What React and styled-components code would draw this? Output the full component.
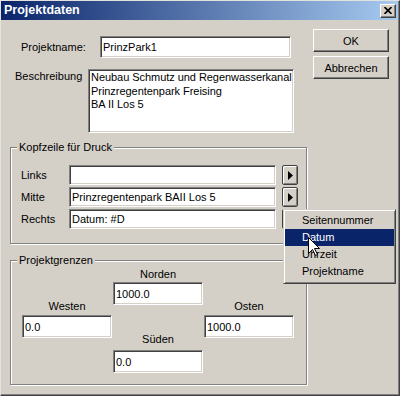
import React from 'react';
import styled, { createGlobalStyle } from 'styled-components';

const GlobalStyle = createGlobalStyle`
  html, body { margin: 0; padding: 0; background: #D4D0C8; }
  body { font-family: "Liberation Sans", Arial, sans-serif; font-size: 11px; color: #000; }
  * { box-sizing: border-box; }
`;

const Window = styled.div`
  position: relative;
  width: 400px;
  height: 396px;
  background: #D4D0C8;
  border: 1px solid;
  border-color: #E4E2DC #404040 #404040 #E4E2DC;
  box-shadow: inset -1px -1px 0 #808080;
  padding: 0 1px 1px 0;
  display: flex;
  flex-direction: column;
`;

const TitleBar = styled.div`
  height: 19px;
  flex: none;
  display: flex;
  align-items: center;
  justify-content: space-between;
  padding: 0 2px 0 3px;
  background: linear-gradient(to right, #0A246A, #A6CAF0);
`;

const Title = styled.span`
  color: #fff;
  font-weight: bold;
  font-size: 12.5px;
  line-height: 15px;
`;

const CloseButton = styled.div`
  width: 16px;
  height: 14px;
  background: #D4D0C8;
  border: 1px solid;
  border-color: #fff #404040 #404040 #fff;
  box-shadow: inset -1px -1px 0 #808080;
  display: flex;
  align-items: center;
  justify-content: center;
`;

const Body = styled.div`
  flex: 1;
  display: grid;
  grid-template-columns: 297px 76px;
  column-gap: 6px;
  align-items: start;
  padding-left: 9px;
`;

const MainCol = styled.div`
  display: flex;
  flex-direction: column;
  padding-top: 16px;
`;

const ButtonCol = styled.div`
  display: flex;
  flex-direction: column;
  gap: 4px;
  padding-top: 9px;
`;

const PushButton = styled.button`
  width: 76px;
  height: 23px;
  margin: 0;
  padding: 0;
  font: inherit;
  font-size: 11px;
  color: #000;
  background: #D4D0C8;
  border: 1px solid;
  border-color: #fff #404040 #404040 #fff;
  box-shadow: inset -1px -1px 0 #808080;
`;

const FormRow = styled.div`
  display: flex;
  align-items: ${p => (p.$top ? 'flex-start' : 'center')};
  padding-left: ${p => p.$indent}px;
  margin-top: ${p => p.$mt || 0}px;
`;

const Label = styled.span`
  flex: none;
  width: ${p => p.$w}px;
  line-height: 13px;
  margin-top: ${p => p.$mt || 0}px;
  white-space: nowrap;
`;

const sunken = `
  border: 1px solid;
  border-color: #808080 #fff #fff #808080;
  box-shadow: inset 1px 1px 0 #404040, inset -1px -1px 0 #D4D0C8;
  background: #fff;
`;

const Field = styled.input`
  ${sunken}
  flex: none;
  width: ${p => p.$w}px;
  height: ${p => p.$h}px;
  margin: ${p => p.$mt || 0}px 0 0 0;
  padding: 0 1px 0 2px;
  font-family: "Liberation Sans", Arial, sans-serif;
  font-size: 11px;
  color: #000;
  outline: none;
`;

const TextBox = styled.textarea`
  ${sunken}
  flex: none;
  width: 206px;
  height: 64px;
  margin: 0;
  padding: 1px 0 0 2px;
  font-family: "Liberation Sans", Arial, sans-serif;
  font-size: 11px;
  line-height: 13.5px;
  letter-spacing: -0.05px;
  color: #000;
  white-space: pre;
  resize: none;
  overflow: hidden;
  outline: none;
`;

const Group = styled.fieldset`
  width: 297px;
  min-width: 0;
  margin: ${p => p.$mt}px 0 0 0;
  padding: 0;
  border: 1px solid #808080;
  box-shadow: inset 1px 1px 0 #fff, 1px 1px 0 #fff;
`;

const Legend = styled.legend`
  margin-left: 6px;
  padding: 0 2px;
  line-height: 14px;
  font-size: 11px;
  background: #D4D0C8;
`;

const HeaderRows = styled.div`
  display: flex;
  flex-direction: column;
  gap: 2px;
  padding: 11px 0 14px 10px;
`;

const HeaderRow = styled.div`
  display: flex;
  align-items: center;
  height: 20px;
`;

const ArrowButton = styled.div`
  flex: none;
  width: 16px;
  height: 20px;
  margin-left: 6px;
  background: #D4D0C8;
  border: 1px solid #404040;
  border-radius: 2px;
  box-shadow: inset 1px 1px 0 #fff, inset -1px -1px 0 #808080;
  display: flex;
  align-items: center;
  justify-content: center;
`;

const BoundsGrid = styled.div`
  display: grid;
  grid-template-columns: 91px 91px 91px;
  align-items: start;
  padding: 0 0 11px 11px;
`;

const BoundsCol = styled.div`
  display: flex;
  flex-direction: column;
`;

const Caption = styled.div`
  width: 90px;
  text-align: center;
  line-height: 13px;
  margin-top: ${p => p.$mt || 0}px;
`;

const Menu = styled.div`
  position: absolute;
  left: 282px;
  top: 208px;
  width: 113px;
  background: #D4D0C8;
  border: 1px solid;
  border-color: #D4D0C8 #404040 #404040 #D4D0C8;
  box-shadow: inset 1px 1px 0 #fff, inset -1px -1px 0 #808080;
  padding: 2px 1px 3px 1px;
`;

const MenuItem = styled.div`
  height: 17px;
  line-height: 17px;
  padding-left: 17px;
  white-space: nowrap;
  background: ${p => (p.$active ? '#0A246A' : 'transparent')};
  color: ${p => (p.$active ? '#fff' : '#000')};
`;

const Cursor = styled.svg`
  position: absolute;
  left: 307px;
  top: 236px;
`;

const Arrow = () => (
  <svg width="5" height="9" viewBox="0 0 5 9">
    <polygon points="0,0 5,4.5 0,9" fill="#000" />
  </svg>
);

export default function App() {
  return (
    <>
      <GlobalStyle />
      <Window>
        <TitleBar>
          <Title>Projektdaten</Title>
          <CloseButton>
            <svg width="8" height="7" viewBox="0 0 8 7">
              <path d="M0.5 0 L7.5 7 M7.5 0 L0.5 7" stroke="#000" strokeWidth="1.6" />
            </svg>
          </CloseButton>
        </TitleBar>
        <Body>
          <MainCol>
            <FormRow $indent={11}>
              <Label $w={79}>Projektname:</Label>
              <Field $w={191} $h={22} readOnly value="PrinzPark1" />
            </FormRow>
            <FormRow $indent={5} $mt={11} $top>
              <Label $w={73} $mt={1}>Beschreibung</Label>
              <TextBox
                readOnly
                wrap="off"
                value={'Neubau Schmutz und Regenwasserkanal\nPrinzregentenpark Freising\nBA II Los 5'}
              />
            </FormRow>
            <Group $mt={7}>
              <Legend>Kopfzeile für Druck</Legend>
              <HeaderRows>
                <HeaderRow>
                  <Label $w={48}>Links</Label>
                  <Field $w={207} $h={20} readOnly value="" />
                  <ArrowButton><Arrow /></ArrowButton>
                </HeaderRow>
                <HeaderRow>
                  <Label $w={48}>Mitte</Label>
                  <Field $w={207} $h={20} readOnly value="Prinzregentenpark BAII Los 5" />
                  <ArrowButton><Arrow /></ArrowButton>
                </HeaderRow>
                <HeaderRow>
                  <Label $w={48}>Rechts</Label>
                  <Field $w={207} $h={20} readOnly value="Datum: #D" />
                  <ArrowButton><Arrow /></ArrowButton>
                </HeaderRow>
              </HeaderRows>
            </Group>
            <Group $mt={9}>
              <Legend>Projektgrenzen</Legend>
              <BoundsGrid>
                <BoundsCol>
                  <Caption $mt={33}>Westen</Caption>
                  <Field $w={90} $h={23} $mt={2} readOnly value="0.0" />
                </BoundsCol>
                <BoundsCol>
                  <Caption $mt={1}>Norden</Caption>
                  <Field $w={90} $h={23} $mt={1} readOnly value="1000.0" />
                  <Caption $mt={28}>Süden</Caption>
                  <Field $w={90} $h={23} $mt={4} readOnly value="0.0" />
                </BoundsCol>
                <BoundsCol>
                  <Caption $mt={33}>Osten</Caption>
                  <Field $w={90} $h={23} $mt={2} readOnly value="1000.0" />
                </BoundsCol>
              </BoundsGrid>
            </Group>
          </MainCol>
          <ButtonCol>
            <PushButton>OK</PushButton>
            <PushButton>Abbrechen</PushButton>
          </ButtonCol>
        </Body>
        <Menu>
          <MenuItem>Seitennummer</MenuItem>
          <MenuItem $active>Datum</MenuItem>
          <MenuItem>Uhrzeit</MenuItem>
          <MenuItem>Projektname</MenuItem>
        </Menu>
        <Cursor width="13" height="20" viewBox="0 0 13 20">
          <path
            d="M0.5 0.5 V16.5 L4.5 12.5 L7.5 18.5 L9.5 17.5 L6.5 11.5 H11.5 Z"
            fill="#fff"
            stroke="#000"
            strokeWidth="1"
            strokeLinejoin="miter"
          />
        </Cursor>
      </Window>
    </>
  );
}
